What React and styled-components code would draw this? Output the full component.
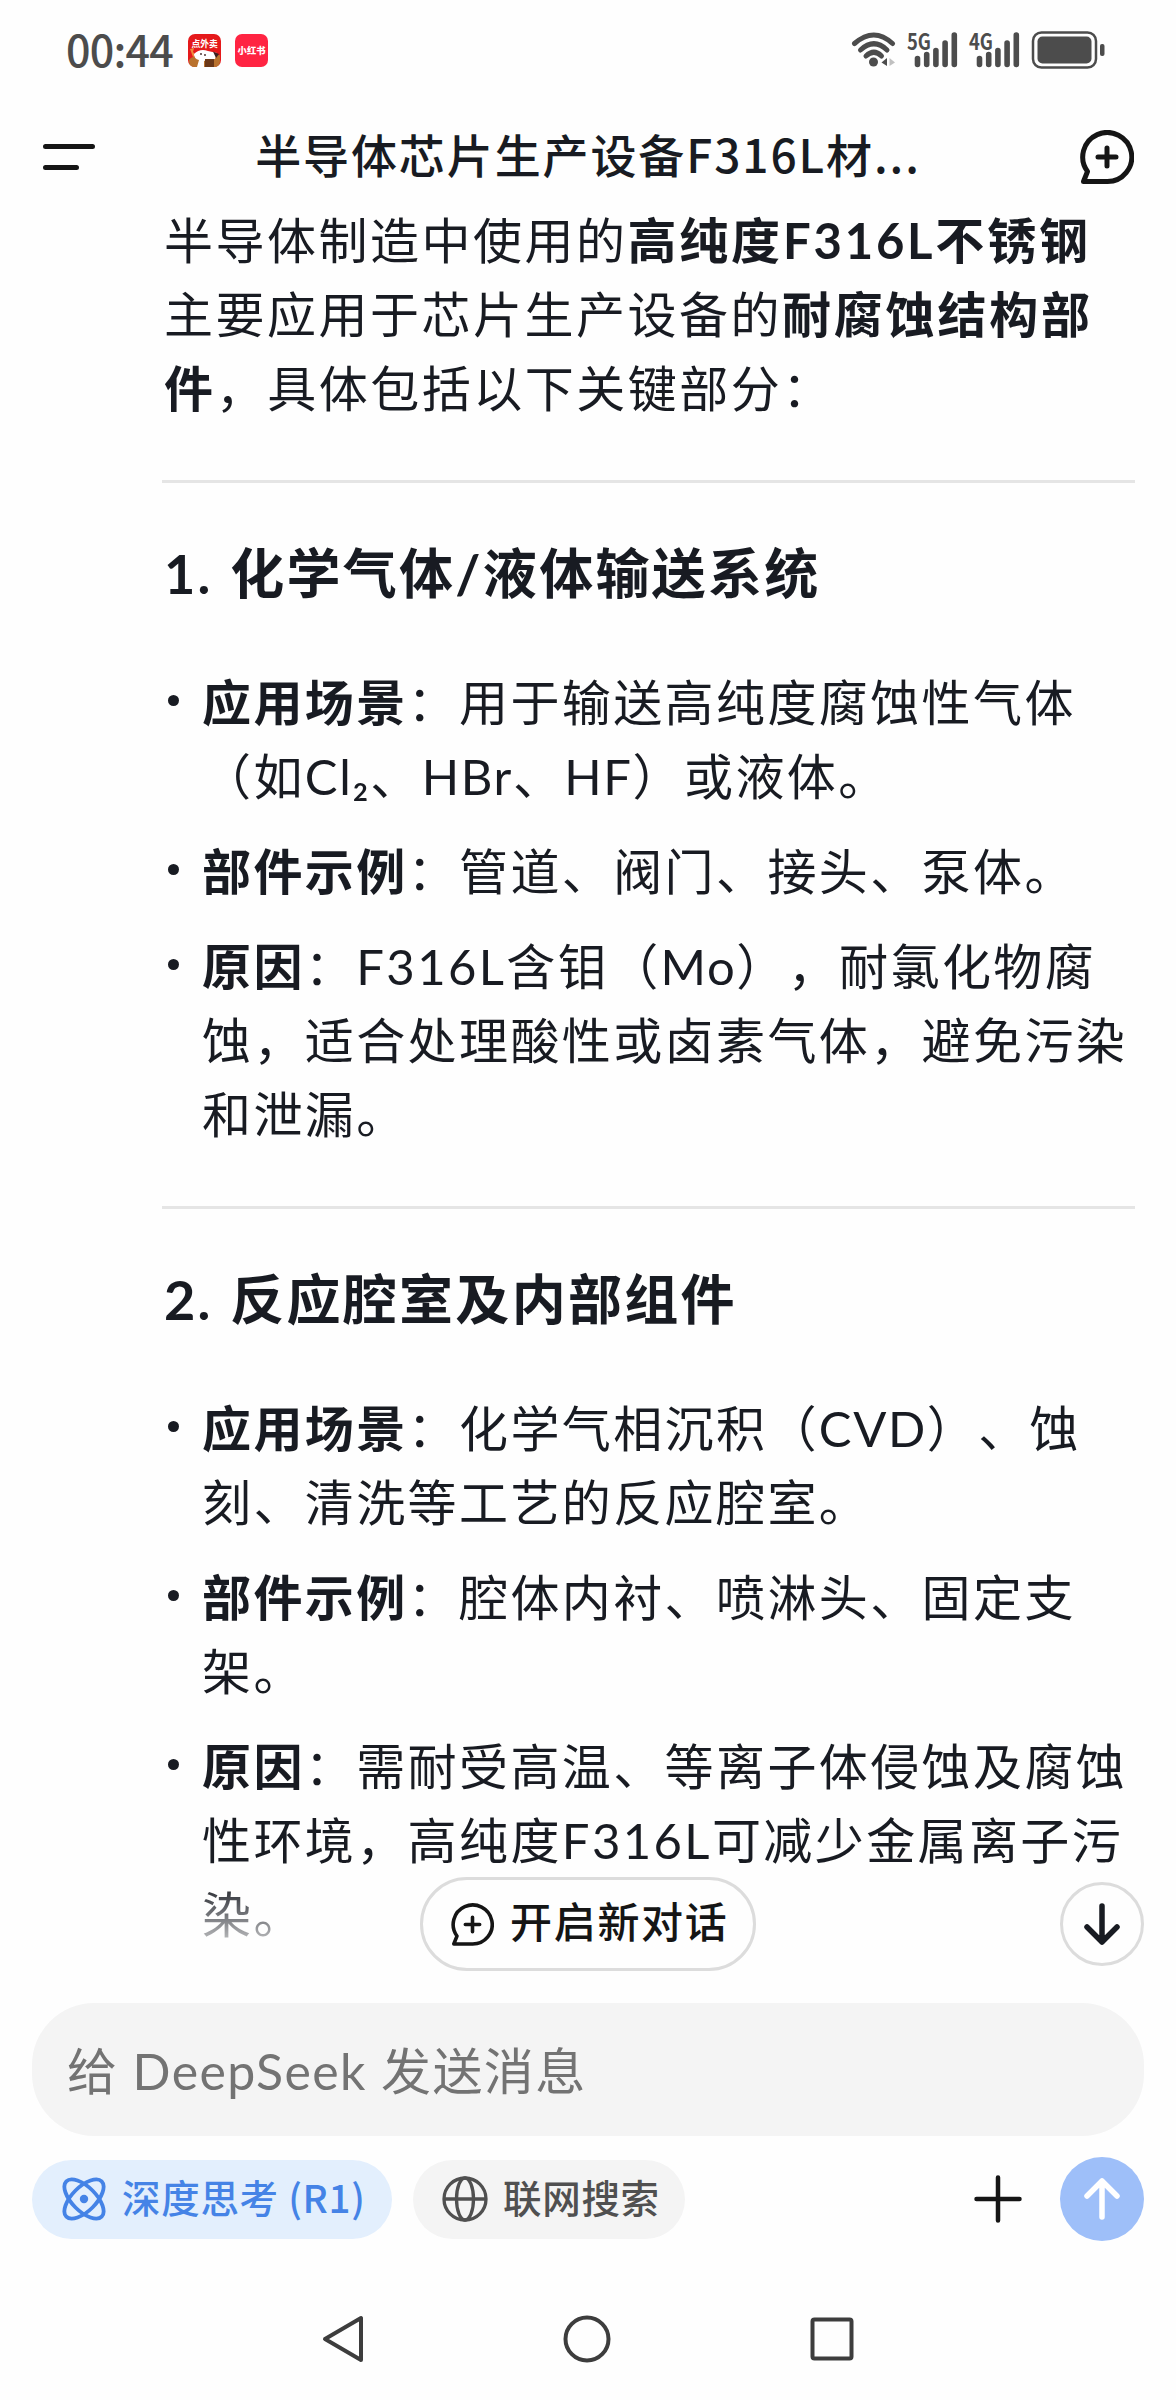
import React from "react";
import styled, { createGlobalStyle } from "styled-components";

const GlobalStyle = createGlobalStyle`
    * {
        box-sizing: border-box;
    }
    body {
        margin: 0;
        background: #fefefe;
    }
    button {
        font-family: inherit;
        border: none;
        background: none;
        padding: 0;
    }
`;

// Styled components
const Screen = styled.div`
    width: 1176px;
    height: 2400px;
    display: flex;
    flex-direction: column;
    overflow: hidden;
    background: #fefefe;
    color: #181b22;
    font-family: Lato, "Noto Sans CJK SC", sans-serif;
    text-spacing-trim: space-all;
    white-space: nowrap;
`;

const StatusBar = styled.div`
    display: flex;
    align-items: center;
    height: 100px;
    padding: 0 71px 0 66px;
    color: #4c4c4c;
`;

const Clock = styled.span`
    width: 122px;
    padding-bottom: 5px;
    font-family: "Noto Sans CJK SC", sans-serif;
    font-size: 43px;
    font-weight: 500;
    letter-spacing: -0.8px;
    line-height: 60px;
`;

const AppIcon = styled.svg`
    width: 33px;
    height: 33px;
    margin-right: 14px;
`;

const StatusIcons = styled.svg`
    margin-left: auto;
`;

const Header = styled.div`
    display: flex;
    align-items: center;
    justify-content: space-between;
    height: 112px;
    padding: 2px 42px 0 43px;
    flex-shrink: 0;
`;

const Title = styled.h1`
    margin: 0;
    padding-bottom: 8px;
    font-family: "Noto Sans CJK SC", sans-serif;
    font-size: 46px;
    font-weight: 500;
    letter-spacing: 1.9px;
    line-height: 60px;
`;

const IconButton = styled.button`
    display: flex;
    color: #151515;
`;

const Chat = styled.div`
    position: relative;
    height: 1775px;
    padding: 0 41px 0 162px;
    overflow: hidden;
    margin-top: -9px;
    flex-shrink: 0;
`;

const Paragraph = styled.p`
    margin: 0;
    padding-left: 2px;
    font-size: 49px;
    line-height: 74px;
    letter-spacing: 2.5px;
    b {
        letter-spacing: 2.8px;
    }
`;

const Divider = styled.hr`
    height: 3px;
    margin: 55px 0 0;
    border: none;
    background: #e5e5e5;
`;

const Heading = styled.h2`
    margin: 51px 0 0;
    padding-left: 2px;
    font-size: 54px;
    font-weight: 700;
    line-height: 80px;
    letter-spacing: 2.3px;
    word-spacing: 2px;
`;

const List = styled.ul`
    display: flex;
    flex-direction: column;
    gap: 21px;
    margin: 51px 0 0;
    padding: 0;
    list-style: none;
`;

const Item = styled.li`
    display: flex;
    font-size: 49px;
    line-height: 74px;
    letter-spacing: 2.4px;
    &::before {
        content: "";
        flex-shrink: 0;
        width: 11px;
        height: 11px;
        margin: 30px 23px 0 6px;
        border-radius: 50%;
        background: #181b22;
    }
`;

const Formula = styled.span`
    letter-spacing: 1.6px;
`;

const Fade = styled.div`
    position: absolute;
    left: 0;
    right: 0;
    bottom: 0;
    height: 97px;
    background: linear-gradient(rgba(254, 254, 254, 0), #fefefe 85px);
`;

const NewChat = styled.button`
    position: absolute;
    left: 420px;
    bottom: 7px;
    display: flex;
    align-items: center;
    gap: 16px;
    width: 336px;
    height: 94px;
    padding-left: 28px;
    border: 3px solid #dcdcdc;
    border-radius: 47px;
    background: #fefefe;
    color: #151515;
    font-family: "Noto Sans CJK SC", sans-serif;
    font-size: 42px;
    font-weight: 500;
    letter-spacing: 1.7px;
`;

const Label = styled.span`
    padding-bottom: ${({ $lift }) => $lift}px;
    line-height: 1.3;
`;

const RoundButton = styled.button`
    display: flex;
    align-items: center;
    justify-content: center;
    width: 84px;
    height: 84px;
    border-radius: 50%;
    background: ${({ $filled }) => ($filled ? "#9ebff9" : "#fefefe")};
    border: ${({ $filled }) => ($filled ? "none" : "3px solid #dcdcdc")};
    color: ${({ $filled }) => ($filled ? "#fff" : "#181b22")};
`;

const ScrollDown = styled(RoundButton)`
    position: absolute;
    right: 32px;
    bottom: 12px;
`;

const Composer = styled.div`
    display: flex;
    flex-direction: column;
    gap: 21px;
    padding: 25px 32px 0;
`;

const Input = styled.div`
    display: flex;
    align-items: center;
    height: 133px;
    padding: 0 0 4px 35px;
    border-radius: 62px;
    background: #f4f4f4;
    color: #737373;
    font-size: 50px;
    letter-spacing: 1.4px;
`;

const Tools = styled.div`
    display: flex;
    align-items: center;
    height: 84px;
`;

const Chip = styled.button`
    display: flex;
    align-items: center;
    width: ${({ $width }) => $width}px;
    height: 79px;
    margin-right: 21px;
    padding-left: 29px;
    gap: 15px;
    border-radius: 40px;
    background: ${({ $active }) => ($active ? "#e3effd" : "#f4f4f4")};
    color: ${({ $active }) => ($active ? "#4583e6" : "#505050")};
    font-family: "Noto Sans CJK SC", sans-serif;
    font-size: 38.5px;
    font-weight: 500;
    letter-spacing: 0.7px;
`;

const AddButton = styled(IconButton)`
    margin: 0 38px 0 auto;
`;

const NavBar = styled.div`
    display: flex;
    align-items: center;
    justify-content: center;
    gap: 199px;
    height: 120px;
    margin-top: 38px;
    color: #3d3d3d;
`;

const BubbleIcon = ({ size, stroke }) => (
    <svg width={size} height={size} viewBox="0 0 54 54" fill="none" stroke="currentColor" strokeWidth={stroke} strokeLinejoin="round" strokeLinecap="round">
        <path d="M3.500 51.500 L7.500 41.500 A24.500 24.500 0 1 1 27 51.500 Z" />
        <path d="M27 18 V36 M18 27 H36" />
    </svg>
);

const AtomIcon = () => (
    <svg width="46" height="46" viewBox="0 0 46 46" fill="none" stroke="currentColor" strokeWidth="3.800">
        <ellipse cx="23" cy="23" rx="25" ry="12" transform="rotate(45 23 23)" />
        <ellipse cx="23" cy="23" rx="25" ry="12" transform="rotate(-45 23 23)" />
        <circle cx="23" cy="23" r="4.200" fill="currentColor" stroke="none" />
    </svg>
);

const GlobeIcon = () => (
    <svg width="46" height="46" viewBox="0 0 46 46" fill="none" stroke="currentColor" strokeWidth="3.300">
        <circle cx="23" cy="23" r="21" />
        <ellipse cx="23" cy="23" rx="8.500" ry="21" />
        <path d="M2 23 H44" />
    </svg>
);

const ArrowIcon = ({ up }) => (
    <svg width="36" height="42" viewBox="0 0 36 42" fill="none" stroke="currentColor" strokeWidth="5.500" strokeLinecap="round" strokeLinejoin="round">
        {up ? <path d="M18 39 V3 M3 18 L18 3 L33 18" /> : <path d="M18 3 V39 M3 24 L18 39 L33 24" />}
    </svg>
);

const Signal = ({ x, label }) => (
    <g transform={`translate(${x} 0)`}>
        <text x="-1" y="18.500" fontSize="22" fontWeight="700" fontFamily="Noto Sans CJK SC, sans-serif" textLength="24" lengthAdjust="spacingAndGlyphs">{label}</text>
        <path d="M9.500 27.500 V33.500 M18.700 23.500 V33.500 M27.900 19.500 V33.500 M37.100 12 V33.500 M46.300 4 V33.500" stroke="currentColor" strokeWidth="5.600" strokeLinecap="round" />
    </g>
);

const sections = [
    {
        title: "1. 化学气体/液体输送系统",
        items: [
            { label: "应用场景", lines: ["：用于输送高纯度腐蚀性气体", "（如Cl₂、HBr、HF）或液体。"] },
            { label: "部件示例", lines: ["：管道、阀门、接头、泵体。"] },
            { label: "原因", lines: ["：F316L含钼（Mo），耐氯化物腐", "蚀，适合处理酸性或卤素气体，避免污染", "和泄漏。"] },
        ],
    },
    {
        title: "2. 反应腔室及内部组件",
        items: [
            { label: "应用场景", lines: ["：化学气相沉积（CVD）、蚀", "刻、清洗等工艺的反应腔室。"] },
            { label: "部件示例", lines: ["：腔体内衬、喷淋头、固定支", "架。"] },
            { label: "原因", lines: ["：需耐受高温、等离子体侵蚀及腐蚀", "性环境，高纯度F316L可减少金属离子污", "染。"] },
        ],
    },
];

// letters such as HBr or CVD are set a little tighter than the rest
const renderLine = (line) =>
    line.split(/([A-Z][A-Za-z]+₂?)/).map((part, i) => (i % 2 ? <Formula key={i}>{part}</Formula> : part));

const App = () => {
    return (
        <Screen lang="zh-CN">
            <GlobalStyle />
            <StatusBar>
                <Clock>00:44</Clock>
                <AppIcon viewBox="0 0 33 33">
                    <rect width="33" height="33" rx="7" fill="#e5191b" />
                    <path d="M1 26 Q4 21 12 23 L32 21 V27 Q32 33 26 33 H7 Q1 33 1 27 Z" fill="#b9722d" />
                    <path d="M2 15 L6 14 L5 18 L8 21 L5 23 Z" fill="#f08a3c" />
                    <path d="M6 20 Q12 14 20 17 L29 19 L27 25 L22 25 L16 27 V33 H9 L11 26 Q6 25 6 20 Z" fill="#fff" />
                    <path d="M25 17.500 L31 20 L28 24 Z" fill="#3b2020" />
                    <circle cx="13" cy="20" r="0.900" fill="#3b2020" />
                    <circle cx="17" cy="21" r="0.900" fill="#3b2020" />
                    <rect x="17" y="25" width="9" height="8" fill="#6b3818" />
                    <text x="3.500" y="12.500" fontSize="8.800" fontWeight="700" fill="#fff" fontFamily="Noto Sans CJK SC, sans-serif">点外卖</text>
                </AppIcon>
                <AppIcon viewBox="0 0 33 33">
                    <rect width="33" height="33" rx="7" fill="#ff2442" />
                    <text x="2.600" y="20.300" fontSize="9.300" fontWeight="900" fill="#fff" fontFamily="Noto Sans CJK SC, sans-serif">小红书</text>
                </AppIcon>
                <StatusIcons width="254" height="58" viewBox="0 -10 254 58" fill="currentColor">
                    <g fill="none" stroke="currentColor" strokeWidth="5" strokeLinecap="round">
                        <path d="M3.500 12.500 Q23 -4.500 41.500 12.500" />
                        <path d="M9.500 19 Q23 6.500 36 19" />
                        <path d="M15 25 Q23 17.500 30.500 25" />
                    </g>
                    <circle cx="22.500" cy="31" r="4.500" />
                    <path d="M36 27 V35 L30.500 31.500 Z" />
                    <path d="M38.500 27 V35 L44 31.500 Z" opacity="0.350" />
                    <Signal x={57} label="5G" />
                    <Signal x={119} label="4G" />
                    <rect x="182" y="1.500" width="63" height="35" rx="8.500" fill="none" stroke="currentColor" strokeWidth="2.500" />
                    <rect x="186.500" y="5.500" width="54" height="27" rx="5" />
                    <rect x="249" y="13" width="4.500" height="12" rx="2" />
                </StatusIcons>
            </StatusBar>
            <Header>
                <IconButton>
                    <svg width="53" height="28" viewBox="0 0 53 28" stroke="currentColor" strokeWidth="5" strokeLinecap="round">
                        <path d="M2.500 3.500 H49.500 M2.500 24.500 H33.500" />
                    </svg>
                </IconButton>
                <Title>半导体芯片生产设备F316L材...</Title>
                <IconButton>
                    <BubbleIcon size={54} stroke={5} />
                </IconButton>
            </Header>
            <Chat>
                <Paragraph>
                    半导体制造中使用的<b>高纯度F316L不锈钢</b><br />
                    主要应用于芯片生产设备的<b>耐腐蚀结构部</b><br />
                    <b>件</b>，具体包括以下关键部分：
                </Paragraph>
                {sections.map((section) => (
                    <React.Fragment key={section.title}>
                        <Divider />
                        <Heading>{section.title}</Heading>
                        <List>
                            {section.items.map((item) => (
                                <Item key={item.label}>
                                    <div>
                                        <b>{item.label}</b>
                                        {item.lines.map((line, i) => (
                                            <React.Fragment key={line}>
                                                {i > 0 && <br />}
                                                {renderLine(line)}
                                            </React.Fragment>
                                        ))}
                                    </div>
                                </Item>
                            ))}
                        </List>
                    </React.Fragment>
                ))}
                <Fade />
                <NewChat>
                    <BubbleIcon size={43} stroke={4.5} />
                    <Label $lift={7}>开启新对话</Label>
                </NewChat>
                <ScrollDown>
                    <ArrowIcon />
                </ScrollDown>
            </Chat>
            <Composer>
                <Input>给 DeepSeek 发送消息</Input>
                <Tools>
                    <Chip $active $width={360}>
                        <AtomIcon />
                        <Label $lift={5}>深度思考 (R1)</Label>
                    </Chip>
                    <Chip $width={272}>
                        <GlobeIcon />
                        <Label $lift={5}>联网搜索</Label>
                    </Chip>
                    <AddButton>
                        <svg width="48" height="48" viewBox="0 0 48 48" stroke="currentColor" strokeWidth="4.500" strokeLinecap="round">
                            <path d="M24 2.500 V45.500 M2.500 24 H45.500" />
                        </svg>
                    </AddButton>
                    <RoundButton $filled>
                        <ArrowIcon up />
                    </RoundButton>
                </Tools>
            </Composer>
            <NavBar>
                <svg width="42" height="48" viewBox="0 0 42 48" fill="none" stroke="currentColor" strokeWidth="4" strokeLinejoin="round">
                    <path d="M39 3 V45 L3 24 Z" />
                </svg>
                <svg width="48" height="48" viewBox="0 0 48 48" fill="none" stroke="currentColor" strokeWidth="4">
                    <circle cx="24" cy="24" r="21.500" />
                </svg>
                <svg width="44" height="44" viewBox="0 0 44 44" fill="none" stroke="currentColor" strokeWidth="4">
                    <rect x="2.500" y="2.500" width="39" height="39" rx="2" />
                </svg>
            </NavBar>
        </Screen>
    );
}

export default App;
